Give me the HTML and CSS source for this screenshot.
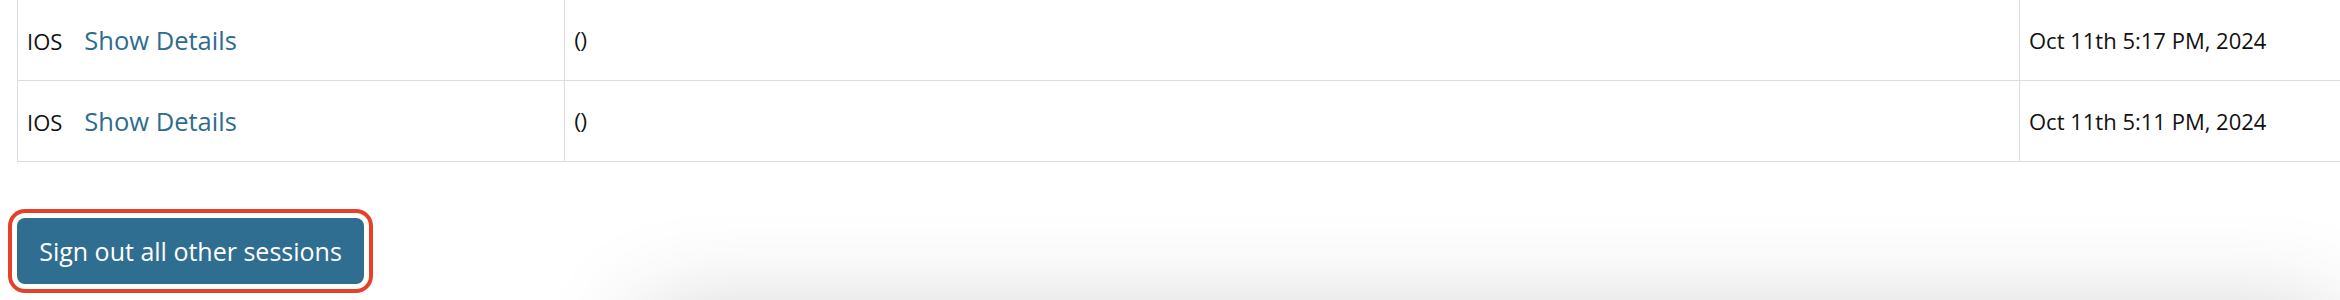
FILE: index.html
```html
<!DOCTYPE html>
<html lang="en">
<head>
    <meta charset="UTF-8">
    <meta name="viewport" content="width=device-width, initial-scale=1.0">
    <title>Sessions</title>
    <link rel="stylesheet" href="styles.css">
</head>
<body>
    <div class="sessions">
        <table class="session-table">
            <colgroup>
                <col class="col-device">
                <col class="col-location">
                <col class="col-date">
            </colgroup>
            <tbody>
                <tr>
                    <td><span class="device">IOS</span><a href="#" class="details-link">Show Details</a></td>
                    <td class="location">()</td>
                    <td class="date">Oct 11th 5:17 PM, 2024</td>
                </tr>
                <tr>
                    <td><span class="device">IOS</span><a href="#" class="details-link">Show Details</a></td>
                    <td class="location">()</td>
                    <td class="date">Oct 11th 5:11 PM, 2024</td>
                </tr>
            </tbody>
        </table>

        <div class="actions">
            <button class="signout-button">Sign out all other sessions</button>
        </div>

        <!-- panel that sits just below the fold, only its shadow shows -->
        <div class="next-panel"></div>
    </div>
</body>
</html>
```

FILE: styles.css
```css
html {
    overflow: hidden;
}

body {
    margin: 0;
    background-color: #fff;
    font-family: 'Open Sans', 'Noto Sans', sans-serif;
    color: #111;
}

.sessions {
    padding-left: 17px;
}

.session-table {
    border-collapse: collapse;
    table-layout: fixed;
    width: 2400px;
    margin-top: -1px;
}

.col-device {
    width: 547px;
}

.col-location {
    width: 1455px;
}

.session-table td {
    border: 1px solid #dcdce4;
    height: 81px;
    padding: 0 9px;
    vertical-align: middle;
    box-sizing: border-box;
}

.device {
    font-size: 22px;
    margin-right: 22px;
}

.details-link {
    color: #2e6c91;
    font-size: 25.5px;
    text-decoration: none;
}

.location {
    font-family: 'Liberation Sans', Arial, sans-serif;
    font-size: 20px;
}

.date {
    font-size: 22px;
}

.actions {
    padding: 56px 0 0 0;
}

.signout-button {
    background-color: #306e91;
    color: #fff;
    font-family: inherit;
    font-size: 25px;
    border: none;
    border-radius: 8px;
    width: 347px;
    height: 66px;
    padding: 0 20px;
    cursor: pointer;
    box-shadow: 0 0 0 5px #fff, 0 0 0 9px #e5402a;
}

.next-panel {
    margin: 27px 0 0 620px;
    height: 200px;
    border-radius: 30px;
    background-color: #fff;
    box-shadow: 0 0 100px rgba(0, 0, 0, 0.18);
}
```
